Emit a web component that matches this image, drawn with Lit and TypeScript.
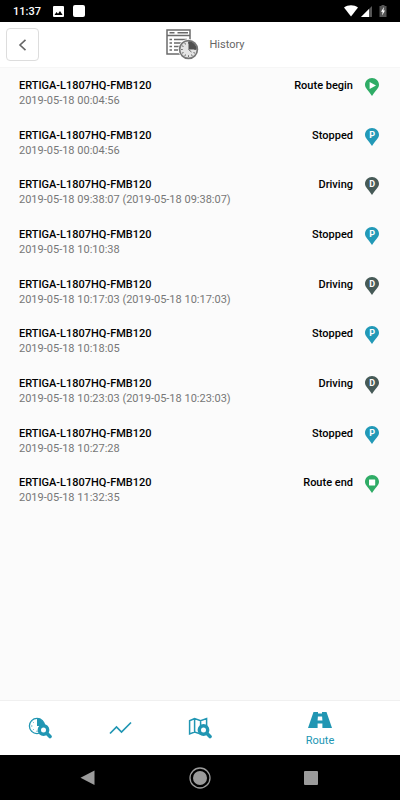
import { LitElement, html, svg, css } from "lit";
import { customElement, property } from "lit/decorators.js";

type Kind = "begin" | "stopped" | "driving" | "end";

interface Entry {
  time: string;
  label: string;
  kind: Kind;
}

const DEVICE = "ERTIGA-L1807HQ-FMB120";

const ENTRIES: Entry[] = [
  { time: "2019-05-18 00:04:56", label: "Route begin", kind: "begin" },
  { time: "2019-05-18 00:04:56", label: "Stopped", kind: "stopped" },
  { time: "2019-05-18 09:38:07 (2019-05-18 09:38:07)", label: "Driving", kind: "driving" },
  { time: "2019-05-18 10:10:38", label: "Stopped", kind: "stopped" },
  { time: "2019-05-18 10:17:03 (2019-05-18 10:17:03)", label: "Driving", kind: "driving" },
  { time: "2019-05-18 10:18:05", label: "Stopped", kind: "stopped" },
  { time: "2019-05-18 10:23:03 (2019-05-18 10:23:03)", label: "Driving", kind: "driving" },
  { time: "2019-05-18 10:27:28", label: "Stopped", kind: "stopped" },
  { time: "2019-05-18 11:32:35", label: "Route end", kind: "end" },
];

const PIN_COLORS: Record<Kind, string> = {
  begin: "#2fac66",
  stopped: "#2299b7",
  driving: "#465a57",
  end: "#2fac66",
};

const PIN_GLYPHS = {
  begin: svg`<path d="M4.600 4l6.400 3.500-6.400 3.500z" fill="#fff"/>`,
  stopped: svg`<text x="7.1" y="10.4" text-anchor="middle">P</text>`,
  driving: svg`<text x="7.1" y="10.4" text-anchor="middle">D</text>`,
  end: svg`<rect x="4" y="4.4" width="6.200" height="6" rx=".4" fill="#fff"/>`,
};

@customElement("map-pin")
export class MapPin extends LitElement {
  @property() kind: Kind = "stopped";

  static styles = css`
    :host { display: block; width: 14px; height: 18px; }
    svg { display: block; }
    text { font: 700 9px Roboto, sans-serif; fill: #fff; }
  `;

  render() {
    return html`<svg width="14" height="18" viewBox="0 0 14 18" aria-hidden="true">
      <path d="M7 0C3.100 0 0 3 0 6.800c0 3.500 3.300 5.600 7 11.200 3.700-5.600 7-7.700 7-11.200C14 3 10.900 0 7 0z" fill=${PIN_COLORS[this.kind]} />
      ${PIN_GLYPHS[this.kind]}
    </svg>`;
  }
}

@customElement("app-root")
export class AppRoot extends LitElement {
  static styles = css`
    :host {
      display: flex;
      flex-direction: column;
      min-height: 100vh;
      background: #fbfbfb;
      color: #111;
      font: 400 11px/15px Roboto, sans-serif;
    }
    svg { display: block; }
    button {
      margin: 0;
      padding: 0;
      border: 0;
      background: none;
      color: inherit;
      font: inherit;
    }
    .status {
      display: flex;
      align-items: center;
      gap: 12px;
      height: 22px;
      padding: 0 13px;
      background: #000;
      color: #fff;
      font-size: 11px;
      font-weight: 500;
    }
    .notes, .signals { display: flex; align-items: center; }
    .notes { gap: 9px; }
    .signals { gap: 3px; margin-left: auto; }
    .battery { margin-left: 4px; }
    .header {
      display: grid;
      grid-template-columns: 1fr auto 1fr;
      align-items: center;
      height: 46px;
      padding: 0 6px;
      background: #fff;
      border-bottom: 1px solid #f6f6f6;
      box-sizing: border-box;
    }
    .back {
      display: grid;
      place-items: center;
      width: 33px;
      height: 33px;
      border: 1px solid #ddd;
      border-radius: 4px;
      color: #666;
    }
    .title {
      display: flex;
      align-items: center;
      gap: 11px;
      margin: 0;
      padding-left: 10px;
      color: #666;
      font-size: 11px;
      font-weight: 400;
    }
    .main { flex: 1; }
    .list {
      display: grid;
      grid-auto-rows: 1fr;
      min-height: 447px;
      margin: 0;
      padding: 0;
      list-style: none;
    }
    .row {
      display: flex;
      gap: 12px;
      padding: 10px 21px 0 19px;
    }
    .info { flex: 1; }
    .name, .state { font-weight: 500; color: #000; }
    .time { color: #777; }
    .tabs {
      display: grid;
      grid-template-columns: 1fr 1fr 1fr 2fr;
      height: 55px;
      background: #fff;
      border-top: 1px solid #f0f0f0;
      box-sizing: border-box;
      color: #2196b3;
    }
    .tab {
      display: flex;
      flex-direction: column;
      align-items: center;
      justify-content: center;
      gap: 5px;
    }
    .tab.active { padding-top: 4px; }
    .system {
      display: flex;
      justify-content: center;
      align-items: center;
      gap: 90px;
      height: 45px;
      background: #000;
      color: #9b9b9b;
    }
  `;

  render() {
    return html`
      <div class="status">
        <span>11:37</span>
        <div class="notes">
          <svg width="11" height="11" viewBox="0 0 11 11"><rect width="11" height="11" rx="1" fill="#fff"/><path d="M1.500 9L3.500 6l1.500 1.700L7 5l2.600 4z" fill="#000"/></svg>
          <svg width="12" height="12" viewBox="0 0 12 12"><rect width="12" height="12" rx="2" fill="#fff"/></svg>
        </div>
        <div class="signals">
          <svg width="14" height="12" viewBox="0 0 14 12"><path d="M0 2.500C4 -.6 10 -.6 14 2.500L7 11.500z" fill="#fff"/></svg>
          <svg width="11" height="11" viewBox="0 0 11 11"><path d="M11 0v11H0z" fill="#555"/><path d="M8 3V11H0z" fill="#fff"/></svg>
          <svg class="battery" width="8" height="12" viewBox="0 0 8 12"><path d="M2.500 0h3v1H7.500v11h-7V1h2z" fill="#555"/><path d="M5 2L2 6.800h1.600L3.100 10.500 6 5.600H4.400z" fill="#fff"/></svg>
        </div>
      </div>

      <header class="header">
        <button class="back" aria-label="Back">
          <svg width="9" height="12" viewBox="0 0 9 12" fill="none" stroke="currentColor" stroke-width="1.600"><path d="M7.500 .8L2 6l5.500 5.200"/></svg>
        </button>
        <h1 class="title">${this.historyIcon()}<span>History</span></h1>
      </header>

      <main class="main">
        <ul class="list">
          ${ENTRIES.map(
            (e) => html`<li class="row">
              <div class="info">
                <div class="name">${DEVICE}</div>
                <div class="time">${e.time}</div>
              </div>
              <span class="state">${e.label}</span>
              <map-pin .kind=${e.kind}></map-pin>
            </li>`
          )}
        </ul>
      </main>

      <nav class="tabs">
        <button class="tab" aria-label="Time search">
          <svg width="24" height="22" viewBox="0 0 24 22">
            <circle cx="9" cy="9" r="7.600" fill="#fff" stroke="currentColor" stroke-width="1.300"/>
            <path d="M9 1.400A7.600 7.600 0 0 1 16.600 9H9z" fill="currentColor"/>
            <path d="M3 9h1.400M9 13.600V15M4.800 4.800l.9.9M4.800 13.200l.9-.9" stroke="currentColor" stroke-width=".8"/>
            ${this.lens(15.500, 13)}
          </svg>
        </button>
        <button class="tab" aria-label="Chart">
          <svg width="24" height="14" viewBox="0 0 24 14" fill="none" stroke="currentColor" stroke-width="1.700"><path d="M2 12.500l6.500-6.500 5 5L23 1.500"/></svg>
        </button>
        <button class="tab" aria-label="Map search">
          <svg width="24" height="22" viewBox="0 0 24 22">
            <path d="M1.600 3.800l5-2.200 6 2.200 6-2.200V15l-6 2-6-2-5 2zM6.600 1.600V15M12.600 3.800V17" fill="none" stroke="currentColor" stroke-width="1.500"/>
            ${this.lens(15.500, 13)}
          </svg>
        </button>
        <button class="tab active" aria-current="page">
          <svg width="24" height="16" viewBox="0 0 24 16"><path d="M5.500 0h4.500v1.500h4V0h4.500L24 16H14.400v-4.500H9.600V16H0zM9.900 4.500l-.3 4h4.800l-.3-4z" fill="currentColor" fill-rule="evenodd"/></svg>
          <span>Route</span>
        </button>
      </nav>

      <div class="system">
        <svg width="20" height="20" viewBox="0 0 20 20"><path d="M15.500 2.500v14.500L1.500 9.800z" fill="currentColor"/></svg>
        <svg width="22" height="22" viewBox="0 0 22 22"><circle cx="11" cy="11" r="10" fill="none" stroke="currentColor" stroke-width="1.300"/><circle cx="11" cy="11" r="7" fill="currentColor"/></svg>
        <svg width="20" height="20" viewBox="0 0 20 20"><rect x="3" y="3" width="14" height="14" rx="1" fill="currentColor"/></svg>
      </div>
    `;
  }

  private lens(x: number, y: number) {
    return svg`
      <path d=${`M${x + 3} ${y + 3}L${x + 6.5} ${y + 6.5}`} stroke="currentColor" stroke-width="3.600" stroke-linecap="round"/>
      <circle cx=${x} cy=${y} r="4.200" fill="#fff" stroke="currentColor" stroke-width="3.400"/>`;
  }

  private historyIcon() {
    const ticks = Array.from({ length: 12 }, (_, i) => i * 30);
    return html`<svg width="33" height="31" viewBox="0 0 33 31" aria-hidden="true">
      <g fill="none" stroke="#6b6b6b" stroke-width="1.500">
        <rect x="1" y="1" width="23" height="24"/>
        <path d="M1 6.500h23M3.500 3.800h5M11.500 3.800H22"/>
        <path d="M3.500 10.500h2.500M8 10.500h13M3.500 14h2.500M8 14h8M3.500 17.500h2.500M8 17.500h5M3.500 21h2.500M8 21h4"/>
      </g>
      <circle cx="22.500" cy="20.500" r="10.400" fill="#fff"/>
      <circle cx="22.500" cy="20.500" r="8.900" fill="#e4e4e4" stroke="#777" stroke-width="1.700"/>
      ${ticks.map((a) => svg`<path d="M22.500 13v1.800" stroke="#777" stroke-width="1" transform=${`rotate(${a} 22.5 20.5)`}/>`)}
      <path d="M22.500 20.500V12.200A8.300 8.300 0 0 1 30.800 20.500z" fill="#505050"/>
      <path d="M22.500 20.500l3 2.500" stroke="#666"/>
    </svg>`;
  }
}
